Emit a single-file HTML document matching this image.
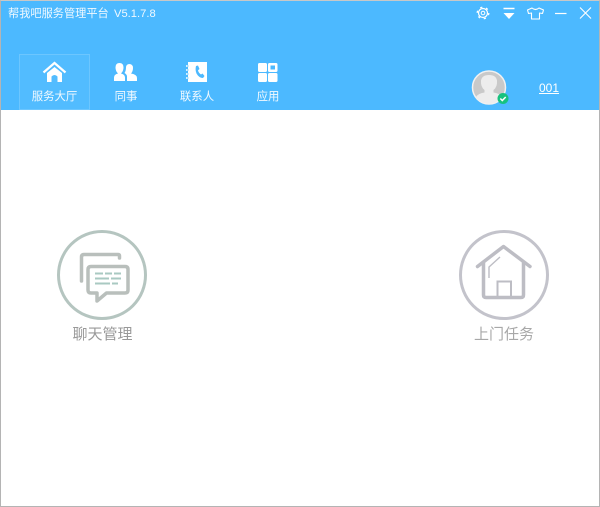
<!DOCTYPE html>
<html><head><meta charset="utf-8">
<style>
html,body{margin:0;padding:0;background:#fff}
#w{position:relative;width:600px;height:507px;overflow:hidden;background:#fff;font-family:"Liberation Sans","Noto Sans CJK SC",sans-serif}
#h{position:absolute;left:0;top:0;width:600px;height:110px;background:#4cb9ff}
.t{position:absolute;white-space:nowrap;line-height:16px}
.n{color:#fff;font-size:11.4px;opacity:.92;text-align:center;width:70px;top:89px}
svg{position:absolute;overflow:visible}
#b{position:absolute;left:0;top:0;width:598px;height:505px;border:1px solid #b4b4b4;border-top-color:#c8c8c8;pointer-events:none}
</style></head><body><div id="w">
<div id="h"></div>
<div class="t" style="left:8px;top:6px;color:#fff;font-size:11.2px;opacity:.92">帮我吧服务管理平台</div>
<div class="t" style="left:114px;top:6px;color:#fff;font-size:11.2px;opacity:.92">V5.1.7.8</div>
<div style="position:absolute;left:19px;top:54px;width:69px;height:54px;border:1px solid #6cc6ff;background:#52bcff"></div>

<svg style="left:0;top:0" width="600" height="110" fill="none">
<!-- home -->
<path d="M43.500 72.500 L54.500 63 L65.500 72.500" stroke="#fff" stroke-width="2.200"/>
<path d="M47 73 L54.500 67 L62 73 V82 H47 Z M51.500 82 V76.500 Q54.500 73.500 57.500 76.500 V82 Z" fill="#fff" fill-rule="evenodd"/>
<!-- people -->
<path d="M114 81 V77.500 Q114 74.500 118 73.500 Q115.500 71 115.500 67.500 Q115.500 63 119.500 63 Q123.500 63 123.500 67.500 Q123.500 71 121 73.500 Q125 74.500 125 77.500 V81 Z" fill="#fff"/>
<path d="M127 81 V76.500 Q127 74.500 124.500 73 Q126 71 126 67.500 Q126 64.500 129 64 Q133 64 133 68 Q133 71.500 131 73.500 Q137 74.500 137 78 V81 Z" fill="#fff"/>
<!-- contacts -->
<rect x="188" y="62" width="19" height="20" fill="#fff"/>
<path d="M186 66h4M186 70h4M186 74h4M186 78h4" stroke="#fff" stroke-width="1.500"/>
<path d="M187 66h2M187 70h2M187 74h2M187 78h2" stroke="#4cb9ff" stroke-width=".6"/>
<path d="M196 66 L198 65.500 L199.500 69 L198 70.300 Q198.500 73 201 74.500 L202.500 73.500 L204.500 76 L203 78 Q199 78 196.500 73.500 Q195 70 196 66 Z" fill="#4cb9ff"/>
<!-- apps -->
<rect x="258" y="63" width="9" height="9" rx="1.500" fill="#fff"/>
<rect x="268" y="63" width="9.500" height="9" rx="1.500" fill="#fff"/>
<rect x="270.500" y="65.500" width="4.500" height="4" fill="#4cb9ff"/>
<rect x="258" y="73" width="9" height="9" rx="1.500" fill="#fff"/>
<rect x="268" y="73" width="9.500" height="9" rx="1.500" fill="#fff"/>
<!-- gear -->
<circle cx="483" cy="13" r="4.500" stroke="#fff" stroke-width="1.200"/>
<circle cx="483" cy="13" r="5.800" stroke="#fff" stroke-width="1.300" stroke-dasharray="2.200 3.870"/>
<circle cx="483" cy="13" r="1.800" stroke="#fff" stroke-width="1"/>
<!-- dropdown -->
<path d="M503.500 8.500 H514.500" stroke="#fff" stroke-width="1.500"/>
<path d="M503.500 13 H514.500 L509 19 Z" fill="#fff"/>
<!-- shirt -->
<path d="M532 8 L527.500 10 L528.500 13.500 L531.500 13 V19 H539.500 V13 L542.500 13.500 L543.500 10 L539 8 Q535.500 11 532 8 Z" stroke="#fff" stroke-width="1.100" stroke-linejoin="round"/>
<!-- min / close -->
<path d="M555 13.500 H566.500" stroke="#fff" stroke-width="1.200"/>
<path d="M580 7.500 L591 18.500 M591 7.500 L580 18.500" stroke="#fff" stroke-width="1.100"/>
<!-- avatar -->
<circle cx="489" cy="87.500" r="16.500" fill="#c9c9c9" stroke="#f1f1f1" stroke-width="1.500"/>
<path d="M476 98 V97 Q478 93.500 484.500 92.500 V90 Q480.500 87 481 80.500 Q482 75 489 75 Q496 75 497 80.500 Q497.500 87 493.500 90 V92.500 Q500 93.500 502 97 V98 Q496 103.500 489 103.500 Q482 103.500 476 98 Z" fill="#ededed"/>
<circle cx="503" cy="98.500" r="5.500" fill="#17c27f"/>
<path d="M500.300 98.500 L502.300 100.500 L505.700 97" stroke="#fff" stroke-width="1.500"/>
</svg>

<div class="t n" style="left:19.500px">服务大厅</div>
<div class="t n" style="left:91px">同事</div>
<div class="t n" style="left:162px">联系人</div>
<div class="t n" style="left:233px">应用</div>
<div class="t" style="left:539px;top:80px;color:#fff;font-size:12px;text-decoration:underline">001</div>

<svg style="left:0;top:0" width="600" height="507" fill="none">
<!-- chat -->
<circle cx="102" cy="275" r="43.500" stroke="#b5c5c0" stroke-width="3"/>
<path d="M119.500 258 V256 Q119.500 254.500 118 254.500 H84 Q81.500 254.500 81.500 257 V281" stroke="#b9bfbc" stroke-width="3.500" stroke-linecap="round"/>
<path d="M91 266.500 Q88 266.500 88 269.500 V290 Q88 293 91 293 H97 V301 L106.500 293 H125 Q128 293 128 290 V269.500 Q128 266.500 125 266.500 Z" stroke="#b9bfbc" stroke-width="3.500" fill="#fff" stroke-linejoin="round"/>
<path d="M95 273.500 H103 M105 273.500 H112 M114 273.500 H121 M95 278.500 H109 M111 278.500 H121 M95 283.500 H110 M112 283.500 H118" stroke="#a9c9c2" stroke-width="2"/>
<!-- house -->
<circle cx="504" cy="275" r="43.500" stroke="#c3c3cb" stroke-width="3"/>
<path d="M477.500 266.500 L503.500 246.500 L530 266.500" stroke="#bdbdc4" stroke-width="3.500" stroke-linejoin="round" stroke-linecap="round"/>
<path d="M483.500 262 V295 Q483.500 297.500 486 297.500 H521 Q523.500 297.500 523.500 295 V262" stroke="#bdbdc4" stroke-width="3.500"/>
<path d="M497.500 297 V281.500 H511 V297" stroke="#bdbdc4" stroke-width="2"/>
<path d="M489 278 V267 L500 257" stroke="#bdbdc4" stroke-width="1.400"/>
</svg>
<div class="t" style="left:72.500px;top:326.500px;color:#999;font-size:15px">聊天管理</div>
<div class="t" style="left:474px;top:326.500px;color:#a8a8a8;font-size:15px">上门任务</div>
<div id="b"></div>
</div></body></html>
